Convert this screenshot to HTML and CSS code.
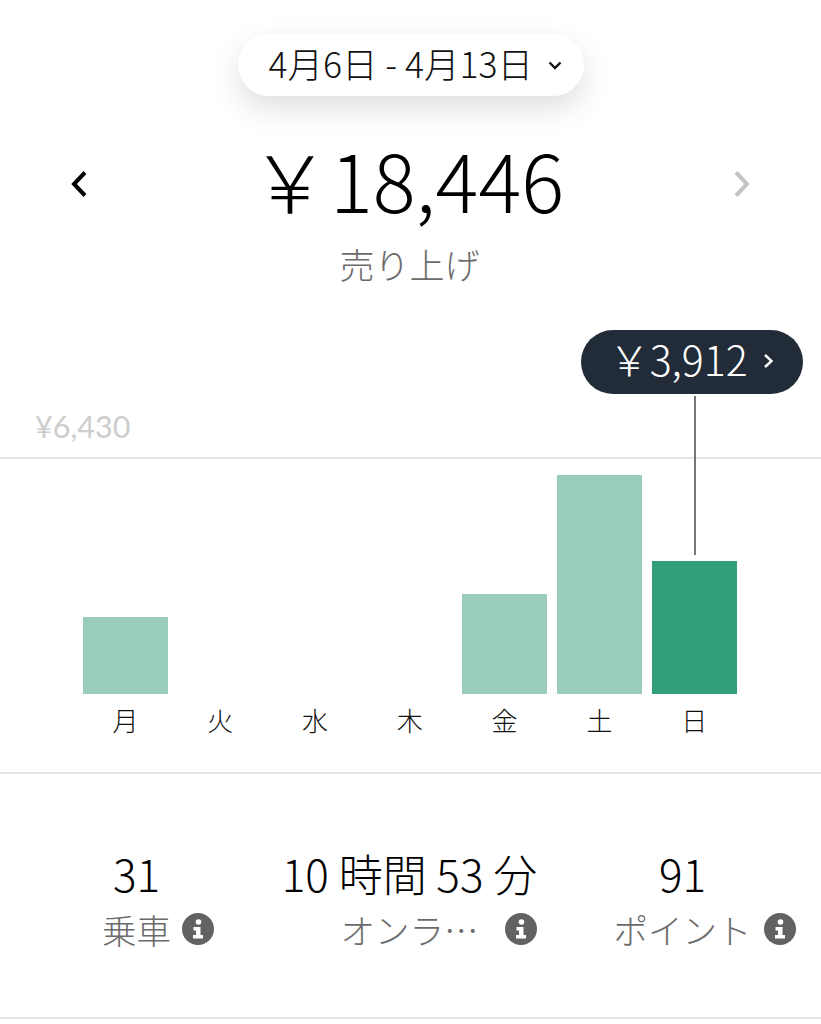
FILE: index.html
```html
<!DOCTYPE html>
<html lang="ja">
<head>
    <meta charset="UTF-8">
    <meta name="viewport" content="width=device-width, initial-scale=1.0">
    <title>売り上げ</title>
    <link rel="stylesheet" href="styles.css">
</head>
<body>

    <div class="date-row">
        <div class="date-pill">
            <span>4月6日 - 4月13日</span>
            <svg class="date-chevron" width="14" height="9" viewBox="0 0 14 9"><path d="M1.5 1.5L7 7l5.500-5.500" fill="none" stroke="#111" stroke-width="2.400"/></svg>
        </div>
    </div>

    <div class="total-row">
        <svg class="nav-arrow" width="18" height="28" viewBox="0 0 18 28"><path d="M15 2.500L4 14l11 11.500" fill="none" stroke="#000" stroke-width="4"/></svg>
        <div class="total-amount">￥18,446</div>
        <svg class="nav-arrow" width="18" height="28" viewBox="0 0 18 28"><path d="M3 2.500L14 14 3 25.500" fill="none" stroke="#c4c4c4" stroke-width="4"/></svg>
    </div>
    <div class="total-label">売り上げ</div>

    <!-- Chart -->
    <div class="chart">
        <div class="chart-max">¥6,430</div>
        <div class="plot">
            <div class="plot-col"><div class="bar" style="height: 77px"></div></div>
            <div class="plot-col"></div>
            <div class="plot-col"></div>
            <div class="plot-col"></div>
            <div class="plot-col"><div class="bar" style="height: 100px"></div></div>
            <div class="plot-col"><div class="bar" style="height: 219px"></div></div>
            <div class="plot-col">
                <div class="bar bar-active" style="height: 133px">
                    <div class="marker">
                        <div class="tooltip">
                            ￥3,912
                            <svg class="tooltip-chevron" width="11" height="16" viewBox="0 0 11 16"><path d="M2 2l6.500 6L2 14" fill="none" stroke="#fff" stroke-width="2.400"/></svg>
                        </div>
                    </div>
                </div>
            </div>
        </div>
        <div class="days">
            <span>月</span><span>火</span><span>水</span><span>木</span><span>金</span><span>土</span><span>日</span>
        </div>
    </div>

    <!-- Stats -->
    <div class="stats">
        <div class="stat">
            <div class="stat-value">31</div>
            <div class="stat-label">
                <span>乗車</span>
                <svg class="info info-near" width="32" height="32" viewBox="0 0 32 32"><circle cx="16" cy="16" r="16" fill="#626262"/><circle cx="16.500" cy="9" r="2.800" fill="#fff"/><path d="M11.500 14h7v8h2.500v3.500H11V22h3v-4.500h-2.500z" fill="#fff"/></svg>
            </div>
        </div>
        <div class="stat">
            <div class="stat-value">10 時間 53 分</div>
            <div class="stat-label">
                <span>オンラ…</span>
                <svg class="info info-far" width="32" height="32" viewBox="0 0 32 32"><circle cx="16" cy="16" r="16" fill="#626262"/><circle cx="16.500" cy="9" r="2.800" fill="#fff"/><path d="M11.500 14h7v8h2.500v3.500H11V22h3v-4.500h-2.500z" fill="#fff"/></svg>
            </div>
        </div>
        <div class="stat">
            <div class="stat-value">91</div>
            <div class="stat-label">
                <span>ポイント</span>
                <svg class="info info-mid" width="32" height="32" viewBox="0 0 32 32"><circle cx="16" cy="16" r="16" fill="#626262"/><circle cx="16.500" cy="9" r="2.800" fill="#fff"/><path d="M11.500 14h7v8h2.500v3.500H11V22h3v-4.500h-2.500z" fill="#fff"/></svg>
            </div>
        </div>
    </div>

</body>
</html>
```

FILE: styles.css
```css
body {
    margin: 0;
    background: #fff;
    color: #000;
    font-family: 'Noto Sans CJK JP', sans-serif;
    font-weight: 300;
    overflow: hidden;
}

.date-row {
    display: flex;
    justify-content: center;
    padding-top: 34px;
}

.date-pill {
    width: 346px;
    height: 62px;
    box-sizing: border-box;
    padding-left: 31px;
    padding-bottom: 6px;
    display: flex;
    align-items: center;
    gap: 15px;
    background: #fff;
    border-radius: 31px;
    box-shadow: 0px 12px 30px rgba(0, 0, 0, 0.13);
    font-size: 35.500px;
    color: #111;
    white-space: nowrap;
}

.date-chevron {
    margin-top: 6px;
}

.total-row {
    height: 90px;
    margin-top: 43px;
    padding: 0 70px;
    display: flex;
    align-items: center;
    justify-content: space-between;
}

.total-amount {
    font-size: 80px;
    line-height: 90px;
    padding-bottom: 12px;
    margin-right: 7px;
    white-space: nowrap;
}

.total-label {
    height: 44px;
    margin-top: 13px;
    padding-right: 2px;
    line-height: 44px;
    text-align: center;
    font-size: 35px;
    color: #6b6b6b;
}

.chart {
    padding-top: 122px;
}

.chart-max {
    height: 36px;
    line-height: 36px;
    padding-left: 35px;
    margin-bottom: 13px;
    font-family: 'Lato', sans-serif;
    font-weight: 400;
    font-size: 30.500px;
    color: #cdcdcd;
}

.plot {
    height: 235px;
    border-top: 2px solid #e4e4e4;
    padding: 0 78px;
    display: grid;
    grid-template-columns: repeat(7, 94.8px);
    align-items: end;
}

.plot-col {
    display: flex;
    justify-content: center;
}

.bar {
    width: 85px;
    background: #99cdb9;
}

.bar-active {
    position: relative;
    background: #339e7c;
}

.marker {
    position: absolute;
    left: 42px;
    bottom: 139px;
    width: 2px;
    height: 159px;
    background: #777;
}

.tooltip {
    position: absolute;
    left: -113px;
    bottom: 161px;
    width: 222px;
    height: 64px;
    box-sizing: border-box;
    padding-left: 28px;
    padding-bottom: 8px;
    display: flex;
    align-items: center;
    background: #222b38;
    border-radius: 32px;
    color: #fff;
    font-size: 41px;
    white-space: nowrap;
}

.tooltip-chevron {
    margin-left: 15px;
    margin-top: 6px;
}

.days {
    height: 50px;
    padding: 0 78px;
    display: grid;
    grid-template-columns: repeat(7, 94.8px);
    align-items: center;
    text-align: center;
    font-size: 26px;
    color: #111;
}

.stats {
    margin-top: 28px;
    height: 247px;
    box-sizing: border-box;
    padding-top: 73px;
    border-top: 2px solid #e4e4e4;
    border-bottom: 2px solid #e4e4e4;
    display: grid;
    grid-template-columns: 273px 273px 273px;
}

.stat {
    text-align: center;
}

.stat-value {
    height: 52px;
    line-height: 52px;
    font-size: 44px;
    white-space: nowrap;
}

.stat-label {
    position: relative;
    margin-top: 4px;
    height: 52px;
    line-height: 52px;
    font-size: 34.500px;
    color: #6b6b6b;
}

.info {
    position: absolute;
    top: 10px;
}

.info-near {
    left: 182px;
}

.info-far {
    left: 232px;
}

.info-mid {
    left: 218px;
}
```
